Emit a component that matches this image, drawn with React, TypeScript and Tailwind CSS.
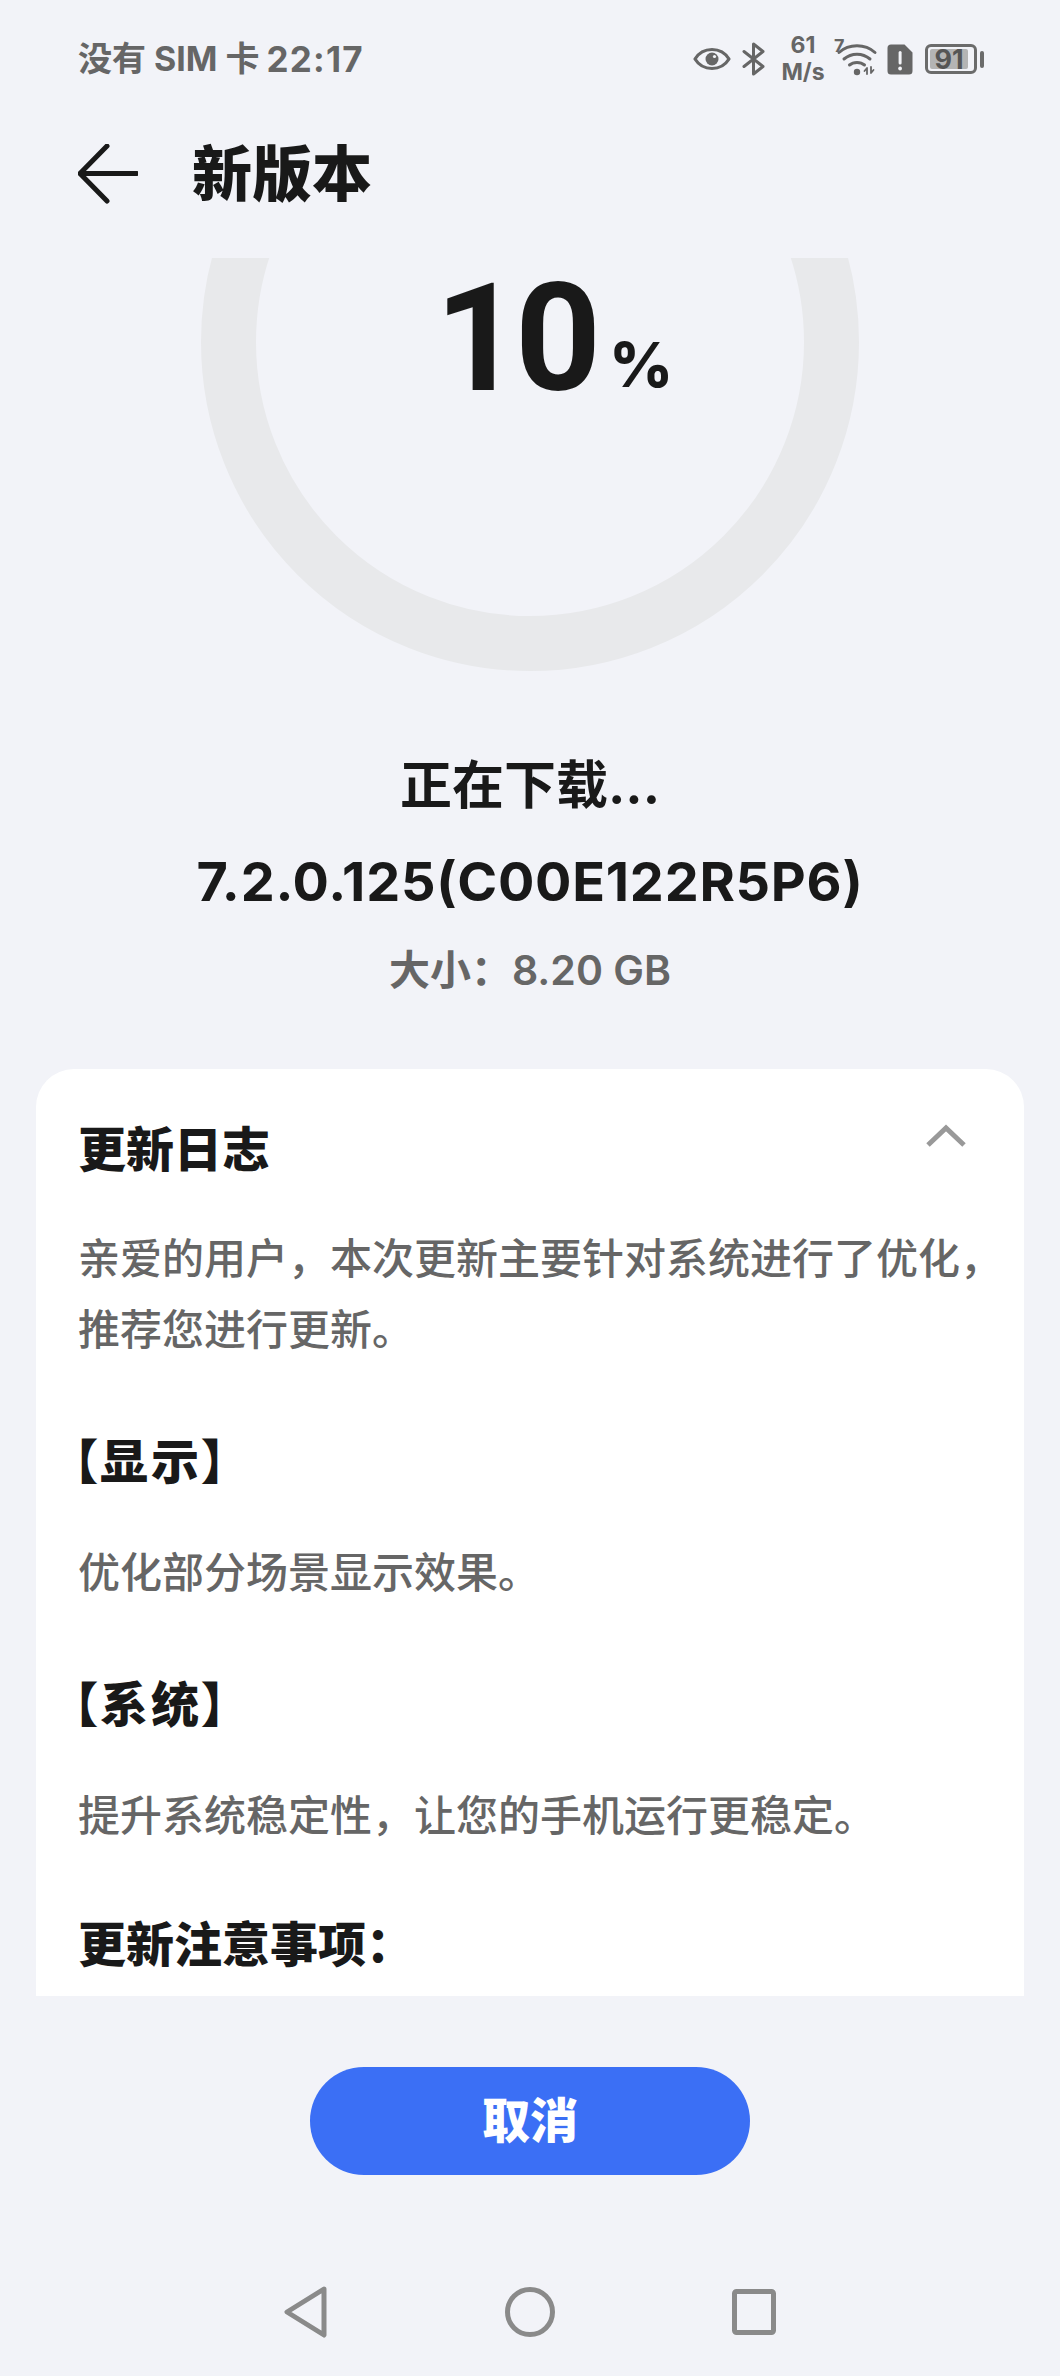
import React from "react";

const cjk = '[font-family:Inter,"Noto_Sans_CJK_SC",sans-serif]';

function Eye() {
  return (
    <svg width="38" height="24" viewBox="0 0 38 24" fill="none">
      <path d="M2 12C6 5.500 12 2.500 19 2.500S32 5.500 36 12C32 18.500 26 21.500 19 21.500S6 18.500 2 12Z" stroke="#666" strokeWidth="3.200" strokeLinejoin="round" />
      <circle cx="19" cy="12" r="6.500" fill="#666" />
      <circle cx="21.500" cy="9.500" r="1.600" fill="#f3f4f8" />
    </svg>
  );
}

function Bluetooth() {
  return (
    <svg width="24" height="34" viewBox="0 0 24 34" fill="none">
      <path d="M2 9.500L21 24.500L11.500 32V2L21 9.500L2 24.500" stroke="#666" strokeWidth="3" strokeLinejoin="round" strokeLinecap="round" />
    </svg>
  );
}

function Wifi() {
  return (
    <svg width="46" height="36" viewBox="0 0 46 36" fill="none">
      <path d="M6 11.500C16 2.500 32 2.500 42 11.500" stroke="#666" strokeWidth="3" strokeLinecap="round" />
      <path d="M11 18C18.500 11.500 29.500 11.500 37 18" stroke="#666" strokeWidth="3" strokeLinecap="round" />
      <path d="M16.500 24C20.500 20.500 27.500 20.500 31.500 24" stroke="#666" strokeWidth="3" strokeLinecap="round" />
      <circle cx="24" cy="31" r="3.200" fill="#666" />
      <path d="M34 33V27L31.500 30M38 26V32L40.500 29" stroke="#666" strokeWidth="1.800" strokeLinecap="round" strokeLinejoin="round" />
    </svg>
  );
}

function SimAlert() {
  return (
    <svg width="26" height="31" viewBox="0 0 26 31" fill="none">
      <path d="M4 0.500H17.500L25.500 8.500V27A3.500 3.500 0 0 1 22 30.500H4A3.500 3.500 0 0 1 0.500 27V4A3.500 3.500 0 0 1 4 0.500Z" fill="#666" />
      <rect x="11.600" y="7" width="3" height="13.500" rx="1.500" fill="#f3f4f8" />
      <circle cx="13.100" cy="24.500" r="1.900" fill="#f3f4f8" />
    </svg>
  );
}

function Battery() {
  return (
    <div className="flex items-center gap-[3px]">
      <div className="flex h-[30px] w-[52px] items-center rounded-[6px] border-[3px] border-[#6b6b6b] p-[2px]">
        <div className="flex h-full w-[91%] items-center justify-center rounded-[2px] bg-[#b4b4b4] text-[27px] leading-none font-bold text-[#555]">91</div>
      </div>
      <div className="h-[17px] w-[4px] rounded-[2px] bg-[#6b6b6b]" />
    </div>
  );
}

function Section({ title, children }: { title: string; children: React.ReactNode }) {
  return (
    <div className="flex flex-col">
      <h3 className="-ml-[5px] h-[70px] text-[48px] leading-[70px] font-black tracking-[3px] text-[#191919] [font-feature-settings:'palt']">{title}</h3>
      <p className="mt-[40px] text-[42px] leading-[71px] font-medium text-[#666]">{children}</p>
    </div>
  );
}

export default function App() {
  return (
    <div className={`flex h-[2376px] w-[1060px] flex-col overflow-hidden bg-[#f2f3f8] ${cjk}`}>
      <div className="relative z-10 flex-none bg-[#f2f3f8]">
        <header className="flex h-[118px] items-start justify-between pt-[36px] pr-[76px] pl-[78px]">
          <div className="flex text-[34px] leading-[46px] font-bold whitespace-nowrap text-[#666]">
            <span>没有 SIM 卡</span>
            <span className="ml-[7px] text-[35px] tracking-[1.2px]">22:17</span>
          </div>
          <div className="-mt-[4px] flex items-center">
            <Eye />
            <div className="ml-[11px]"><Bluetooth /></div>
            <div className="ml-[15px] flex w-[44px] flex-col items-center text-[23px] leading-[27px] font-bold text-[#666]">
              <span>61</span>
              <span>M/s</span>
            </div>
            <div className="relative ml-[8px] h-[36px] w-[46px]">
              <Wifi />
              <span className="absolute -top-[4px] left-[1px] text-[18px] leading-[18px] font-bold text-[#666]">7</span>
            </div>
            <div className="ml-[8px]"><SimAlert /></div>
            <div className="ml-[12px]"><Battery /></div>
          </div>
        </header>

        <div className="flex h-[140px] items-center pb-[28px] pl-[78px]">
          <svg width="60" height="60" viewBox="0 0 60 60" fill="none">
            <path d="M29 2L2 29.500L29 57M2 29.500H59" stroke="#191919" strokeWidth="5" strokeLinecap="round" strokeLinejoin="round" />
          </svg>
          <h1 className="ml-[54px] text-[60px] leading-[70px] font-black text-[#191919]">新版本</h1>
        </div>
      </div>

      <main className="flex min-h-0 flex-1 flex-col">
        <div className="relative mx-auto -mt-[245px] h-[658px] w-[658px] flex-none rounded-full border-[55px] border-[#e8e9eb]">
          <div className="absolute top-[196px] left-[179px] flex items-start font-bold text-[#191919]">
            <span className="text-[150px] leading-[150px] tracking-[-6px] [font-family:Roboto,sans-serif]">10</span>
            <span className="mt-[61px] ml-[14px] text-[62px] leading-[80px] font-extrabold [font-family:Inter,sans-serif]">%</span>
          </div>
        </div>

        <div className="mt-[77px] flex flex-col items-center">
          <div className="h-[76px] text-[52px] leading-[76px] font-bold text-[#191919]">正在下载...</div>
          <div className="mt-[23px] h-[70px] text-[54px] leading-[70px] font-bold tracking-[0.75px] text-[#191919]">7.2.0.125(C00E122R5P6)</div>
          <div className="mt-[23px] h-[60px] text-[41px] leading-[60px] font-semibold text-[#666]">大小：8.20 GB</div>
        </div>

        <section className="mx-[36px] mt-[69px] flex h-[927px] flex-none flex-col gap-[62px] overflow-hidden rounded-t-[38px] bg-white pt-[46px] pl-[42px]">
          <div className="flex flex-col">
            <div className="flex items-start justify-between">
              <h2 className="h-[70px] text-[48px] leading-[70px] font-black text-[#191919]">更新日志</h2>
              <svg className="mt-[9px] mr-[57px]" width="42" height="24" viewBox="0 0 42 24" fill="none">
                <path d="M3 21L21 4L39 21" stroke="#999" strokeWidth="5" />
              </svg>
            </div>
            <p className="mt-[38px] text-[42px] leading-[71px] font-medium text-[#666]">亲爱的用户，本次更新主要针对系统进行了优化，推荐您进行更新。</p>
          </div>
          <Section title="【显示】">优化部分场景显示效果。</Section>
          <Section title="【系统】">提升系统稳定性，让您的手机运行更稳定。</Section>
          <h3 className="-mt-[3px] h-[70px] text-[48px] leading-[70px] font-black text-[#191919]">更新注意事项：</h3>
        </section>

        <div className="flex flex-none justify-center pt-[71px]">
          <button className="h-[108px] w-[440px] rounded-full bg-[#3b6ff5] text-[48px] font-black text-white">取消</button>
        </div>

        <nav className="mt-[111px] flex flex-none items-center justify-center gap-[177px]">
          <svg width="44" height="52" viewBox="0 0 44 52" fill="none">
            <path d="M40 3L3 26L40 49Z" stroke="#8a8a8a" strokeWidth="5" strokeLinejoin="round" />
          </svg>
          <svg width="50" height="50" viewBox="0 0 50 50" fill="none">
            <circle cx="25" cy="25" r="22.500" stroke="#8a8a8a" strokeWidth="5" />
          </svg>
          <svg width="44" height="46" viewBox="0 0 44 46" fill="none">
            <rect x="2.500" y="2.500" width="39" height="41" rx="2" stroke="#8a8a8a" strokeWidth="5" />
          </svg>
        </nav>
      </main>
    </div>
  );
}
